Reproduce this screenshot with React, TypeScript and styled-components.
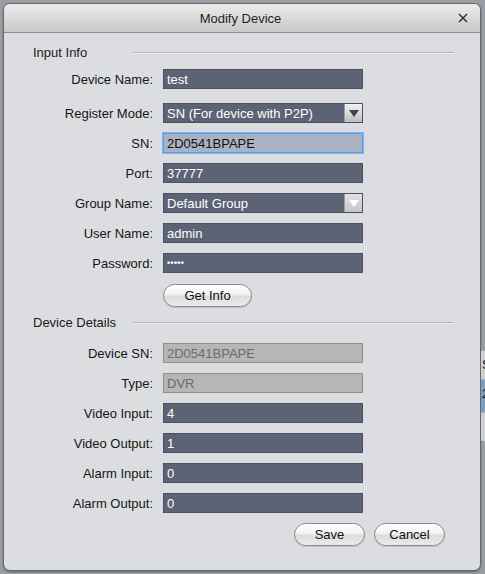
import styled, { createGlobalStyle } from 'styled-components';

const GlobalStyle = createGlobalStyle`
  html, body {
    margin: 0;
    padding: 0;
    background: #9a9da3;
  }
  body {
    font-family: "Liberation Sans", Arial, sans-serif;
    font-size: 13px;
    color: #111;
  }
`;

type Kind = 'text' | 'select' | 'focus' | 'disabled' | 'password';

type Row = {
    label: string;
    value: string;
    kind?: Kind;
    dimArrow?: boolean;
};

const inputRows: Row[] = [
    { label: 'Device Name:', value: 'test' },
    { label: 'Register Mode:', value: 'SN (For device with P2P)', kind: 'select' },
    { label: 'SN:', value: '2D0541BPAPE', kind: 'focus' },
    { label: 'Port:', value: '37777' },
    { label: 'Group Name:', value: 'Default Group', kind: 'select', dimArrow: true },
    { label: 'User Name:', value: 'admin' },
    { label: 'Password:', value: '•••••', kind: 'password' },
];

const detailRows: Row[] = [
    { label: 'Device SN:', value: '2D0541BPAPE', kind: 'disabled' },
    { label: 'Type:', value: 'DVR', kind: 'disabled' },
    { label: 'Video Input:', value: '4' },
    { label: 'Video Output:', value: '1' },
    { label: 'Alarm Input:', value: '0' },
    { label: 'Alarm Output:', value: '0' },
];

function FormRow({ row }: { row: Row }) {
    const kind = row.kind ?? 'text';
    return (
        <RowLine>
            <Label>{row.label}</Label>
            <Field $kind={kind}>
                <FieldText $kind={kind}>{row.value}</FieldText>
                {kind === 'select' && (
                    <ArrowBox $dim={!!row.dimArrow}>
                        <svg width="10" height="7" viewBox="0 0 10 7">
                            <path d="M0 0 L10 0 L5 7 Z" fill={row.dimArrow ? '#ffffff' : '#3d4350'} />
                        </svg>
                    </ArrowBox>
                )}
            </Field>
        </RowLine>
    );
}

export default function App() {
    return (
        <Page>
            <GlobalStyle />
            <Dialog>
                <TitleBar>
                    <Title>Modify Device</Title>
                    <CloseButton>
                        <svg width="10" height="10" viewBox="0 0 10 10">
                            <path d="M1 1 L9 9 M9 1 L1 9" stroke="#2a2a2a" strokeWidth="1.4" />
                        </svg>
                    </CloseButton>
                </TitleBar>
                <Body>
                    <SectionHeader>
                        <span>Input Info</span>
                        <Rule />
                    </SectionHeader>
                    <Rows $top={9}>
                        {inputRows.map((r, i) => (
                            <Spaced key={r.label} $extra={i === 0 ? 4 : 0}>
                                <FormRow row={r} />
                            </Spaced>
                        ))}
                    </Rows>
                    <ButtonLine>
                        <PillButton $width={89}>Get Info</PillButton>
                    </ButtonLine>
                    <SectionHeader $top={7}>
                        <span>Device Details</span>
                        <Rule />
                    </SectionHeader>
                    <Rows $top={13}>
                        {detailRows.map((r) => (
                            <FormRow key={r.label} row={r} />
                        ))}
                    </Rows>
                    <Footer>
                        <PillButton $width={71}>Save</PillButton>
                        <PillButton $width={71}>Cancel</PillButton>
                    </Footer>
                </Body>
            </Dialog>
            <Backdrop>
                <BackRow $text="S" />
                <BackRow $selected $text="2" />
                <BackRow />
            </Backdrop>
        </Page>
    );
}

const Page = styled.div`
    display: flex;
    align-items: flex-start;
    padding: 3px 0 0 3px;
    height: 574px;
    box-sizing: border-box;
    overflow: hidden;
`;

const Dialog = styled.div`
    flex: none;
    width: 478px;
    height: 568px;
    box-sizing: border-box;
    border: 1px solid #63676e;
    border-radius: 7px;
    background: #dcdde1;
    overflow: hidden;
    display: flex;
    flex-direction: column;
    box-shadow: 0 1px 2px rgba(0, 0, 0, 0.35);
`;

const TitleBar = styled.div`
    height: 28px;
    flex: none;
    display: flex;
    align-items: center;
    background: linear-gradient(#ececec, #d6d6d6 60%, #c9c9c9);
    border-bottom: 1px solid #8e9096;
    padding: 0 10px 0 14px;
`;

const Title = styled.div`
    flex: 1;
    text-align: center;
    padding-left: 7px;
    color: #1e1e1e;
`;

const CloseButton = styled.div`
    width: 14px;
    display: flex;
    justify-content: center;
`;

const Body = styled.div`
    flex: 1;
    padding: 11px 26px 0 29px;
    display: flex;
    flex-direction: column;
`;

const SectionHeader = styled.div<{ $top?: number }>`
    display: grid;
    grid-template-columns: 100px 1fr;
    align-items: center;
    height: 16px;
    margin-top: ${(p) => p.$top ?? 0}px;
    color: #1a1a1a;
`;

const Rule = styled.div`
    height: 1px;
    background: #b3b5ba;
    border-bottom: 1px solid #eceef1;
    margin-top: 1px;
`;

const Rows = styled.div<{ $top: number }>`
    display: flex;
    flex-direction: column;
    gap: 10px;
    margin-top: ${(p) => p.$top}px;
`;

const Spaced = styled.div<{ $extra: number }>`
    margin-bottom: ${(p) => p.$extra}px;
`;

const RowLine = styled.div`
    display: grid;
    grid-template-columns: 149px 200px;
    column-gap: 10px;
    align-items: center;
    margin-left: -29px;
`;

const Label = styled.div`
    text-align: right;
    color: #151515;
    white-space: nowrap;
`;

const Field = styled.div<{ $kind: Kind }>`
    height: 20px;
    box-sizing: border-box;
    display: flex;
    align-items: stretch;
    background: ${(p) =>
        p.$kind === 'focus' ? '#a8b2c3' : p.$kind === 'disabled' ? '#b6b6b6' : '#5b6374'};
    border: 1px solid
        ${(p) => (p.$kind === 'focus' ? '#5a9cec' : p.$kind === 'disabled' ? '#8f8f8f' : '#4a5060')};
    box-shadow: ${(p) => (p.$kind === 'focus' ? '0 0 0 1px #7fb2f0' : 'none')};
    overflow: hidden;
`;

const FieldText = styled.div<{ $kind: Kind }>`
    flex: 1;
    display: flex;
    align-items: center;
    padding-left: 3px;
    white-space: nowrap;
    color: ${(p) => (p.$kind === 'focus' ? '#111' : p.$kind === 'disabled' ? '#6b6b6b' : '#ffffff')};
    font-size: ${(p) => (p.$kind === 'password' ? '9px' : '13px')};
    font-weight: ${(p) => (p.$kind === 'password' ? 'bold' : 'normal')};
    letter-spacing: ${(p) => (p.$kind === 'password' ? '0.3px' : '0')};
`;

const ArrowBox = styled.div<{ $dim: boolean }>`
    width: 18px;
    margin: -1px -1px -1px 0;
    display: flex;
    align-items: center;
    justify-content: center;
    background: ${(p) =>
        p.$dim
            ? 'linear-gradient(#e2e2e2, #c6c6c6)'
            : 'linear-gradient(#f4f4f4, #d8d8d8 55%, #b9b9b9)'};
    border-left: 1px solid #9a9ca0;
`;

const ButtonLine = styled.div`
    margin-top: 11px;
    padding-left: 130px;
    display: flex;
`;

const PillButton = styled.button<{ $width: number }>`
    width: ${(p) => p.$width}px;
    height: 23px;
    border-radius: 12px;
    border: 1px solid #8a8b8e;
    background: linear-gradient(#ffffff, #f2f2f2 45%, #dcdcdc 55%, #ebebeb);
    font-family: "Liberation Sans", Arial, sans-serif;
    font-size: 13px;
    color: #111;
    padding: 0;
    box-shadow: 0 1px 1px rgba(0, 0, 0, 0.12);
`;

const Footer = styled.div`
    margin-top: 10px;
    display: flex;
    justify-content: flex-end;
    gap: 9px;
    padding-right: 9px;
`;

const Backdrop = styled.div`
    flex: 1;
    min-width: 0;
    display: flex;
    flex-direction: column;
    margin-top: 347px;
    background: #d4d5d8;
`;

const BackRow = styled.div<{ $selected?: boolean; $text?: string }>`
    height: ${(p) => (p.$selected ? 32 : 28)}px;
    background: ${(p) => (p.$selected ? '#7f9cc0' : '#cfd0d3')};
    border-top: 1px solid #a9abb0;
    font-size: 13px;
    line-height: 28px;
    padding-left: 1px;
    overflow: hidden;
    &::before {
        content: '${(p) => p.$text ?? ''}';
    }
`;
